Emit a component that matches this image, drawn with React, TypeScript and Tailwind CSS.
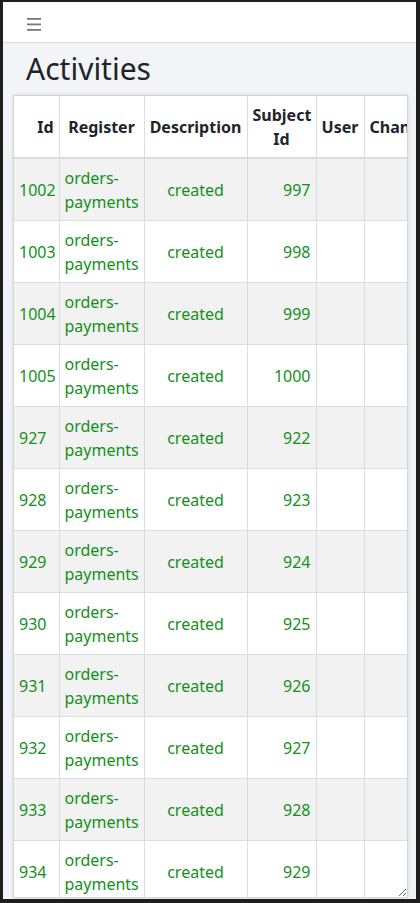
import React from "react";

const rows: [string, string][] = [
  ["1002", "997"],
  ["1003", "998"],
  ["1004", "999"],
  ["1005", "1000"],
  ["927", "922"],
  ["928", "923"],
  ["929", "924"],
  ["930", "925"],
  ["931", "926"],
  ["932", "927"],
  ["933", "928"],
  ["934", "929"],
  ["935", "930"],
  ["936", "931"],
];

export default function App() {
  return (
    <div
      className="w-[420px] h-[903px] bg-[#1e1e1e] pl-[3px] pt-[2px] pr-[4px] pb-[4px]"
      style={{ fontFamily: '"Noto Sans", "Open Sans", sans-serif' }}
    >
      <div className="flex flex-col h-full bg-[#f3f4f8] overflow-hidden">
        <header className="h-[41px] shrink-0 bg-white border-b border-[#d7dadf] flex items-center pl-[24px]">
          <svg width="14" height="13" viewBox="0 0 14 13" className="mt-[4px]">
            <rect x="0" y="0" width="14" height="1.8" fill="#787878" />
            <rect x="0" y="5.5" width="14" height="1.8" fill="#787878" />
            <rect x="0" y="11" width="14" height="1.8" fill="#787878" />
          </svg>
        </header>
        <h1 className="mt-[8px] ml-[23px] text-[30px] leading-[36px] text-[#1f2329] font-normal">
          Activities
        </h1>
        <div className="mt-[8px] ml-[10px] mr-[8px] mb-[1px] flex-1 min-h-0 bg-white border border-[#d3d5d9] shadow-[0_0_4px_rgba(0,0,0,0.12)] overflow-auto resize [scrollbar-width:none]">
          <table className="table-fixed border-collapse text-[16px] leading-[24px] w-[479px]">
            <colgroup>
              <col className="w-[45px]" />
              <col className="w-[85px]" />
              <col className="w-[103px]" />
              <col className="w-[69px]" />
              <col className="w-[48px]" />
              <col className="w-[129px]" />
            </colgroup>
            <thead>
              <tr className="h-[62px] border-b-2 border-[#dcdde0]">
                <th className="px-[5px] text-right align-middle font-bold text-[#212529] border-r border-[#dcdde0]">Id</th>
                <th className="px-[5px] text-center align-middle font-bold text-[#212529] border-r border-[#dcdde0]">Register</th>
                <th className="px-[5px] text-center align-middle font-bold text-[#212529] border-r border-[#dcdde0]">Description</th>
                <th className="px-[5px] text-center align-middle font-bold text-[#212529] border-r border-[#dcdde0]">Subject Id</th>
                <th className="px-[5px] text-center align-middle font-bold text-[#212529] border-r border-[#dcdde0]">User</th>
                <th className="px-[5px] text-left align-middle font-bold text-[#212529] whitespace-nowrap">Changes</th>
              </tr>
            </thead>
            <tbody>
              {rows.map(([id, subj], i) => (
                <tr
                  key={id}
                  className={(i % 2 === 0 ? "bg-[#f2f2f2]" : "bg-white") + " h-[62px] border-b border-[#dcdde0] text-[#13901a]"}
                >
                  <td className="px-[5px] pt-[2px] align-middle text-left border-r border-[#dcdde0]">{id}</td>
                  <td className="px-[5px] pt-[2px] align-middle text-left border-r border-[#dcdde0]">orders-<br />payments</td>
                  <td className="px-[5px] pt-[2px] align-middle text-center border-r border-[#dcdde0]">created</td>
                  <td className="px-[5px] pt-[2px] align-middle text-right border-r border-[#dcdde0]">{subj}</td>
                  <td className="px-[5px] pt-[2px] align-middle border-r border-[#dcdde0]"></td>
                  <td className="px-[5px] pt-[2px] align-middle"></td>
                </tr>
              ))}
            </tbody>
          </table>
        </div>
      </div>
    </div>
  );
}
